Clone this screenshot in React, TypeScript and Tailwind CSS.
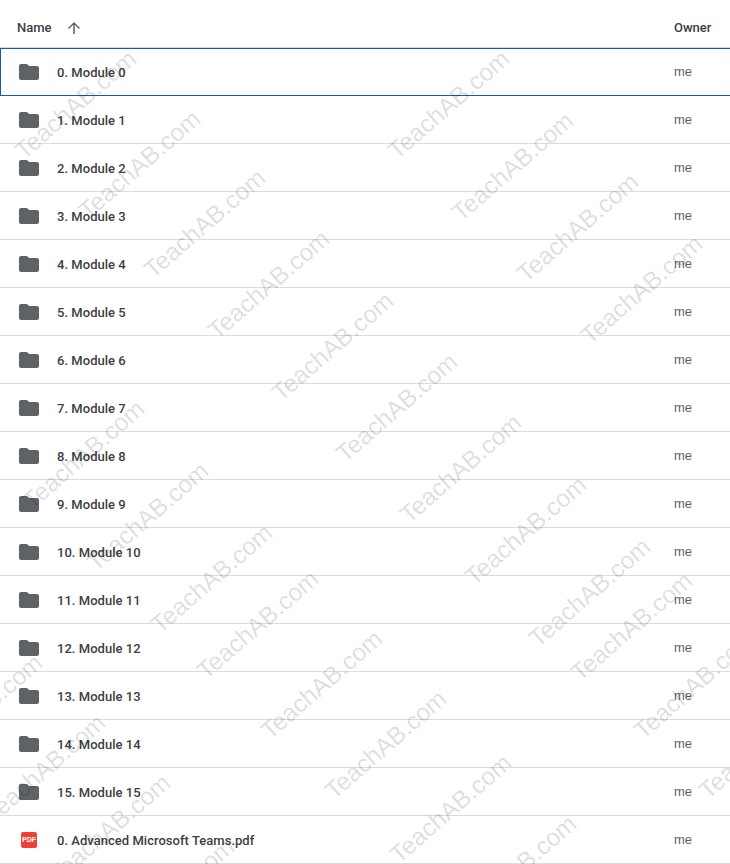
const rows = [
  "0. Module 0",
  "1. Module 1",
  "2. Module 2",
  "3. Module 3",
  "4. Module 4",
  "5. Module 5",
  "6. Module 6",
  "7. Module 7",
  "8. Module 8",
  "9. Module 9",
  "10. Module 10",
  "11. Module 11",
  "12. Module 12",
  "13. Module 13",
  "14. Module 14",
  "15. Module 15",
]

// centre points of the repeated watermark text
const marks: [number, number][] = [
  [76, 105], [140, 165], [205, 224], [269, 285], [333, 347], [397, 408], [461, 469], [526, 531], [590, 593],
  [449, 105], [513, 167], [578, 228], [642, 290],
  [84, 455], [148, 517], [212, 579],
  [258, 625], [322, 685], [386, 745], [451, 809], [516, 870],
  [632, 627], [695, 685], [760, 745],
  [-18, 709], [45, 769], [110, 829], [174, 893],
]

function FolderIcon() {
  return (
    <svg width="24" height="24" viewBox="0 0 24 24" className="fill-[#5f6368] shrink-0">
      <path d="M10 4H4c-1.1 0-2 .9-2 2v12c0 1.1.9 2 2 2h16c1.1 0 2-.9 2-2V8c0-1.1-.9-2-2-2h-8l-2-2z" />
    </svg>
  )
}

function PdfIcon() {
  return (
    <div className="w-6 h-6 flex items-center justify-center shrink-0">
      <div className="w-4 h-4 rounded-[2px] bg-[#ea4335] flex items-center justify-center text-white text-[7px] leading-none font-bold font-['Liberation_Sans',sans-serif]">
        PDF
      </div>
    </div>
  )
}

function Row({ name, selected, pdf }: { name: string; selected?: boolean; pdf?: boolean }) {
  return (
    <div
      className={`h-12 flex items-center ${
        selected ? "pl-4 border-t border-b border-l border-[#1a56b8]" : "pl-[17px] border-b border-[#dadce0]"
      }`}
    >
      {pdf ? <PdfIcon /> : <FolderIcon />}
      <span className="ml-4 flex-1 pt-[2px] text-[13px] font-[460] tracking-[.03px] text-[#3c4043] font-['Roboto',sans-serif]">
        {name}
      </span>
      <span className="w-[56px] text-[13px] text-[#5f6368] font-['Liberation_Sans',sans-serif]">me</span>
    </div>
  )
}

export default function App() {
  return (
    <div className="relative h-[864px] overflow-hidden bg-white">
      <div className="h-12 flex items-center pt-[9px] pl-[17px] border-b border-[#dadce0] text-[13px] font-medium text-[#3c4043] font-['Roboto',sans-serif]">
        <span>Name</span>
        <svg width="18" height="18" viewBox="0 0 24 24" className="ml-[13px] fill-[#5f6368]">
          <path d="M4 12l1.41 1.41L11 7.83V20h2V7.83l5.58 5.59L20 12l-8-8-8 8z" />
        </svg>
        <span className="ml-auto w-[56px]">Owner</span>
      </div>
      {rows.map((name, i) => (
        <Row key={name} name={name} selected={i === 0} />
      ))}
      <Row name="0. Advanced Microsoft Teams.pdf" pdf />

      {marks.map(([x, y]) => (
        <span
          key={`${x}-${y}`}
          className="absolute -translate-x-1/2 -translate-y-1/2 -rotate-[41deg] whitespace-nowrap text-[24.5px] leading-none text-black/[.14] font-['Liberation_Sans',sans-serif] pointer-events-none"
          style={{ left: x, top: y }}
        >
          TeachAB.com
        </span>
      ))}
    </div>
  )
}
